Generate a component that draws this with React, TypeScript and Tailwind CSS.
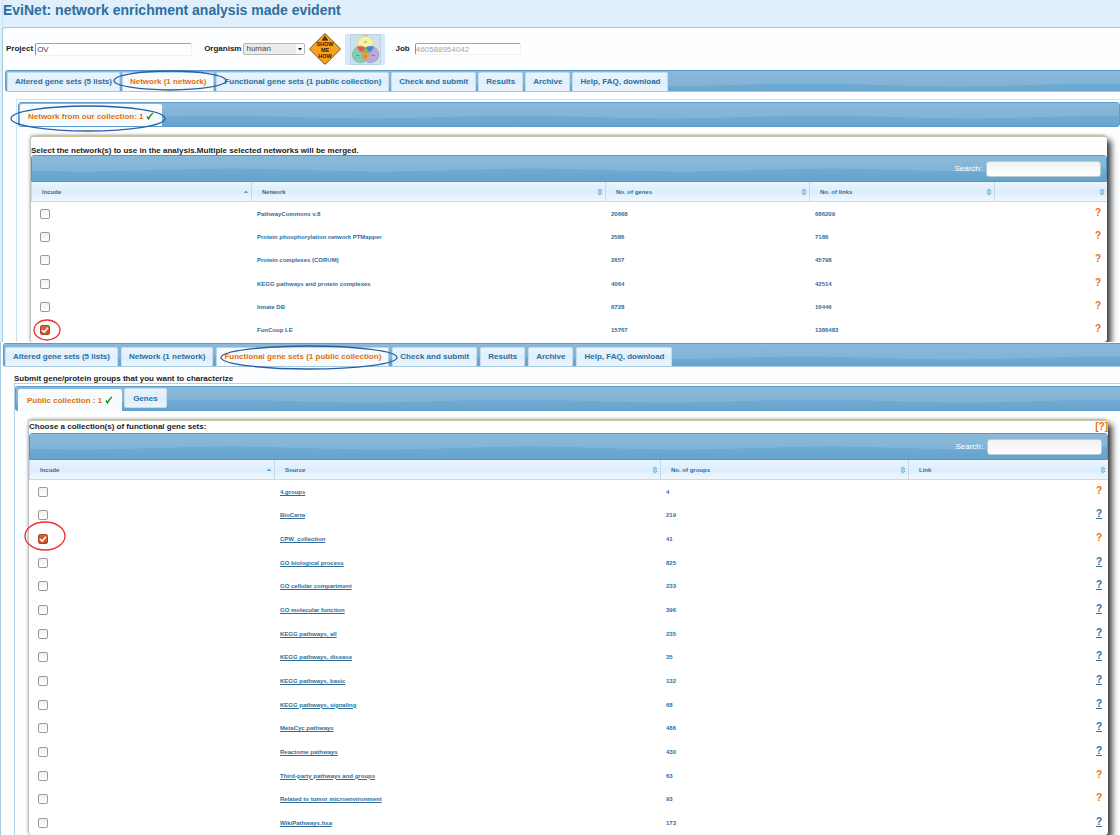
import React, { useId } from "react";

type Column = { label: string; width: string; sort: "up" | "both" };

const NETWORK_COLUMNS: Column[] = [
  { label: "Incude", width: "w-[220px]", sort: "up" },
  { label: "Network", width: "", sort: "both" },
  { label: "No. of genes", width: "w-[204px]", sort: "both" },
  { label: "No. of links", width: "w-[185px]", sort: "both" },
  { label: "", width: "w-[113px]", sort: "both" },
];

const NETWORKS = [
  { name: "PathwayCommons v.8", genes: "20668", links: "686209" },
  { name: "Protein phosphorylation network PTMapper", genes: "2586", links: "7186" },
  { name: "Protein complexes (CORUM)", genes: "2657", links: "45798" },
  { name: "KEGG pathways and protein complexes", genes: "4064", links: "42514" },
  { name: "Innate DB", genes: "6728", links: "16446" },
  { name: "FunCoup LE", genes: "15767", links: "1386483", checked: true },
];

const COLLECTION_COLUMNS: Column[] = [
  { label: "Incude", width: "w-[245px]", sort: "up" },
  { label: "Source", width: "", sort: "both" },
  { label: "No. of groups", width: "w-[248px]", sort: "both" },
  { label: "Link", width: "w-[200px]", sort: "both" },
];

const COLLECTIONS = [
  { name: "4.groups", groups: "4", local: true },
  { name: "BioCarta", groups: "219" },
  { name: "CPW_collection", groups: "41", local: true, checked: true },
  { name: "GO biological process", groups: "825" },
  { name: "GO cellular compartment", groups: "233" },
  { name: "GO molecular function", groups: "396" },
  { name: "KEGG pathways, all", groups: "235" },
  { name: "KEGG pathways, disease", groups: "35" },
  { name: "KEGG pathways, basic", groups: "132" },
  { name: "KEGG pathways, signaling", groups: "68" },
  { name: "MetaCyc pathways", groups: "486" },
  { name: "Reactome pathways", groups: "430" },
  { name: "Third-party pathways and groups", groups: "63", local: true },
  { name: "Related to tumor microenvironment", groups: "93", local: true },
  { name: "WikiPathways.hsa", groups: "173" },
];

const MAIN_TABS = [
  "Altered gene sets (5 lists)",
  "Network (1 network)",
  "Functional gene sets (1 public collection)",
  "Check and submit",
  "Results",
  "Archive",
  "Help, FAQ, download",
];

function Wave() {
  const id = useId();
  return (
    <svg className="absolute inset-0 h-full w-full" aria-hidden="true">
      <defs>
        <linearGradient id={id + "low"} x1="0" y1="12" x2="0" y2="26" gradientUnits="userSpaceOnUse">
          <stop offset="0" stopColor="#70abd2" />
          <stop offset="1" stopColor="#65a2cd" />
        </linearGradient>
        <linearGradient id={id + "top"} x1="0" y1="0" x2="0" y2="1">
          <stop offset="0" stopColor="#8ab9da" />
          <stop offset="1" stopColor="#7db1d5" />
        </linearGradient>
        <pattern id={id} x="-100" width="300" height="27" patternUnits="userSpaceOnUse">
          <path d="M0 12.500 C55 12.500 95 15.500 150 15.500 C205 15.500 245 12.500 300 12.500 V27 H0 Z" fill={`url(#${id}low)`} />
        </pattern>
      </defs>
      <rect width="100%" height="100%" fill={`url(#${id}top)`} />
      <rect width="100%" height="100%" fill={`url(#${id})`} />
    </svg>
  );
}

function Ring({ className }: { className: string }) {
  return (
    <svg className={`pointer-events-none absolute z-10 overflow-visible ${className}`} aria-hidden="true">
      <ellipse cx="50%" cy="50%" rx="50%" ry="50%" fill="none" stroke="currentColor" strokeWidth="1.3" />
    </svg>
  );
}

function Tick() {
  return (
    <svg viewBox="0 0 8 10" className="h-[10px] w-2" aria-hidden="true">
      <path d="M1 4.500 L2.600 6.800 Q4.200 3.200 7 1" fill="none" stroke="#0c8a10" strokeWidth="1.400" />
    </svg>
  );
}

function MainTabs({ active, ring, gap }: { active: number; ring: string; gap: string }) {
  return (
    <nav className="relative h-full">
      <Wave />
      <div className={`relative flex h-full items-end ${gap}`} role="tablist">
        {MAIN_TABS.map((tab, i) => (
          <div key={tab} className="relative shrink-0">
            <button
              type="button"
              role="tab"
              aria-selected={i === active}
              className={`block h-[19px] rounded-t-[2px] border-x border-t px-[7px] text-[8px] leading-[18px] font-bold whitespace-nowrap ${
                i === active
                  ? "border-[#b5d5ee] bg-[#f8fbfe] text-[#e17009]"
                  : "border-[#c5dbec] bg-linear-to-b from-[#ebf5fd] via-[#dfeffc] to-[#eaf4fd] text-[#2e6e9e]"
              }`}
            >
              {tab}
            </button>
            {i === active && <Ring className={`text-[#2b5fa3] ${ring}`} />}
          </div>
        ))}
      </div>
    </nav>
  );
}

function SortIcon({ kind }: { kind: "up" | "both" }) {
  return (
    <svg viewBox="0 0 6 8" className="h-2 w-[6px]" aria-hidden="true">
      {kind === "up" ? (
        <path d="M0.500 5 L3 2.500 L5.500 5 Z" fill="#5ba3d6" />
      ) : (
        <g fill="#c4e0f4" stroke="#6aaedb" strokeWidth="0.900">
          <path d="M0.900 3 L3 0.900 L5.100 3 Z" />
          <path d="M0.900 5 L3 7.100 L5.100 5 Z" />
        </g>
      )}
    </svg>
  );
}

function CheckBox({ label, checked, ring }: { label: string; checked?: boolean; ring: string }) {
  return (
    <div className="relative ml-[9px] grid h-[10px] w-[10px]">
      <input
        type="checkbox"
        aria-label={label}
        defaultChecked={checked}
        className="peer col-start-1 row-start-1 h-[10px] w-[10px] appearance-none rounded-[2px] border border-[#9a9a9a] bg-linear-to-b from-[#f0f0f0] to-white checked:border-[#a04a2c] checked:from-[#d9623a] checked:to-[#cf5428]"
      />
      <svg
        viewBox="0 0 10 10"
        className="pointer-events-none invisible col-start-1 row-start-1 h-[10px] w-[10px] peer-checked:visible"
        aria-hidden="true"
      >
        <path d="M2 5 L4.200 7.200 L8 2.800" fill="none" stroke="#fff" strokeWidth="1.600" />
      </svg>
      {checked && <Ring className={`text-[#f2312c] ${ring}`} />}
    </div>
  );
}

function SearchBar({ id }: { id: string }) {
  return (
    <div className="relative h-[27px] overflow-hidden rounded-t-[3px] border border-[#4f9ad0]">
      <Wave />
      <div className="relative flex h-full items-center justify-end gap-1 pr-[5px]">
        <label htmlFor={id} className="text-[8px] text-white">
          Search:
        </label>
        <input
          id={id}
          type="text"
          className="h-4 w-[115px] rounded-[3px] border border-[#b9cbd8] bg-linear-to-b from-[#f1f1f1] to-white px-1 text-[8px] text-[#333] outline-none"
        />
      </div>
    </div>
  );
}

function TableHead({ columns }: { columns: Column[] }) {
  return (
    <thead>
      <tr className="h-5">
        {columns.map((c, i) => (
          <th
            key={i}
            className={`h-5 border-b border-l border-[#c5dbec] bg-linear-to-b from-[#eaf5fd] via-[#dcedfb] to-[#eef7fe] p-0 ${c.width}`}
          >
            <div className="flex items-center justify-between pr-[2px] pl-[10px] text-[6px] leading-[10px] text-[#2e6e9e]">
              <span>{c.label}</span>
              <SortIcon kind={c.sort} />
            </div>
          </th>
        ))}
      </tr>
    </thead>
  );
}

function WarningSign() {
  return (
    <svg viewBox="0 0 32 32" className="h-8 w-8" role="img" aria-label="Show me how">
      <rect x="4.900" y="4.900" width="22.200" height="22.200" rx="1.200" transform="rotate(45 16 16)" fill="#f9a11b" stroke="#4a3410" strokeWidth="0.700" />
      <path d="M16 2.400 L19.200 7.600 H12.800 Z" fill="#2a1d08" />
      <path d="M16 4.400 V6.600" stroke="#f9a11b" strokeWidth="0.700" />
      <g fill="#2a1d08" fontFamily="Liberation Sans, sans-serif" fontWeight="700" fontSize="5.500" textAnchor="middle">
        <text x="16" y="12.600">SHOW</text>
        <text x="16" y="18.800">ME</text>
        <text x="16" y="25">HOW</text>
      </g>
    </svg>
  );
}

function VennButton() {
  return (
    <button type="button" aria-label="Venn diagram" className="flex h-[31px] w-10 items-center justify-center bg-[#d3e8f8]">
      <svg viewBox="0 0 31 31" className="h-[31px] w-[31px]" aria-hidden="true">
        <rect x="0.500" y="0.500" width="30" height="30" fill="#cce0ee" stroke="#bdd2e2" />
        <circle cx="15.500" cy="10" r="8" fill="#f6f3a4" stroke="#c9c78c" strokeWidth="0.500" />
        <circle cx="10.500" cy="20.500" r="8.300" fill="#82cbb4" stroke="#6aa996" strokeWidth="0.500" />
        <circle cx="20.500" cy="20.500" r="8.300" fill="#b3a5d3" fillOpacity="0.900" stroke="#8f83b3" strokeWidth="0.500" />
        <path d="M7.400 12.400 Q11.500 11 15.500 13.800 L12.300 18.500 Q8.200 17.500 7.400 12.400 Z" fill="#ee5a4f" />
        <path d="M23.600 12.400 Q19.500 11 15.500 13.800 L18.700 18.500 Q22.800 17.500 23.600 12.400 Z" fill="#4a8fd0" />
        <path d="M15.500 13.500 L18.900 18.300 Q15.500 19.800 12.100 18.300 Z" fill="#79c043" />
        <path d="M12.300 18.300 Q15.500 19.800 18.700 18.300 Q20 23 15.500 27 Q11 23 12.300 18.300 Z" fill="#f39a3d" />
        <path d="M14 8 H17 M6.500 21.500 H9 M21.500 21.500 H24.500 M15.500 21 V23.500 M10.500 15 H12 M19 15 H20.500" stroke="#555" strokeWidth="0.600" />
        <path d="M14 2.500 V1 H17 V2.500" fill="none" stroke="#e4a090" strokeWidth="0.700" />
      </svg>
    </button>
  );
}

const cardClass =
  "rounded-[3px] border-t border-[#c6c4a0] bg-white shadow-[4px_4px_6px_#333,-1px_-1px_3px_rgba(0,0,0,0.3)]";
const fieldClass =
  "rounded-[2px] border border-t-[#a5a5a5] border-l-[#8f8f8f] border-r-[#f0f0f0] border-b-[#f0f0f0] bg-white text-[8px] leading-[10px] outline-none";
const labelClass = "text-[8px] font-bold text-[#1c1c1c]";

export default function App() {
  return (
    <div className="min-h-screen overflow-hidden bg-[#dfeffc] font-['Liberation_Sans',Arial,sans-serif] text-[#2e6e9e]">
      <section className="overflow-hidden pl-[2px]">
        <h1 className="h-[27px] border-l border-[#cfe2f1] text-[14px] leading-5 font-bold text-[#2e6e9e]">
          EviNet: network enrichment analysis made evident
        </h1>
        <div className="rounded-tl-[3px] border-t border-l border-[#a6c9e2] bg-[#fcfeff] pl-[2px]">
          <form className="flex h-[42px] items-center pl-px">
            <label htmlFor="project" className={labelClass}>
              Project
            </label>
            <input id="project" type="text" defaultValue="OV" className={`ml-[2px] h-[13px] w-[157px] px-px text-[#444] ${fieldClass}`} />
            <label htmlFor="organism" className={`ml-3 ${labelClass}`}>
              Organism
            </label>
            <div className="relative ml-[2px]">
              <select
                id="organism"
                defaultValue="human"
                className="block h-3 w-[62px] appearance-none rounded-[2px] border border-[#b5b5b5] bg-[#ebebeb] pl-[2px] text-[8px] leading-[10px] text-[#444] outline-none"
              >
                <option value="human">human</option>
              </select>
              <svg viewBox="0 0 8 10" className="pointer-events-none absolute top-px right-px h-[10px] w-2" aria-hidden="true">
                <rect width="8" height="10" fill="#f8f8f8" />
                <path d="M2 4 H6 L4 6.500 Z" fill="#111" />
              </svg>
            </div>
            <div className="ml-1">
              <WarningSign />
            </div>
            <div className="ml-1">
              <VennButton />
            </div>
            <label htmlFor="job" className={`ml-[10px] ${labelClass}`}>
              Job
            </label>
            <input id="job" type="text" defaultValue="460588954042" className={`ml-[5px] h-3 w-[106px] text-[#a5a5a5] ${fieldClass}`} />
          </form>

          <div className="h-[22px] rounded-l-[3px] border-t border-b border-l border-[#5c9ccc] border-b-[#a6c9e2]">
            <MainTabs active={1} gap="gap-[2px] pl-px" ring="-left-2 -top-px h-[19px] w-[112px]" />
          </div>

          <div className="mt-[7px] ml-[11px] border-t border-l border-[#cfe2f0] pt-[2px] pl-px">
            <div className="relative h-[25px] rounded-[3px] border border-[#5c9ccc]">
              <Wave />
              <div className="relative flex h-full items-end pl-px">
                <div className="relative">
                  <button
                    type="button"
                    className="flex h-[22px] items-center gap-[2px] rounded-t-[2px] bg-[#f8fbfe] px-2 pt-[3px] text-[8px] font-bold whitespace-nowrap text-[#e17009]"
                  >
                    Network from our collection: 1 <Tick />
                  </button>
                  <Ring className="top-[2px] -left-[9px] h-[25px] w-[154px] text-[#2b5fa3]" />
                </div>
              </div>
            </div>

            <div className={`mt-[9px] mr-[13px] ml-[13px] ${cardClass}`}>
              <p className="h-[18px] pt-2 text-[8px] leading-[12px] font-bold whitespace-nowrap text-[#1c1c1c]">
                Select the network(s) to use in the analysis.Multiple selected networks will be merged.
              </p>
              <SearchBar id="network-search" />
              <table className="h-[160px] w-full table-fixed border-separate border-spacing-0 text-left text-[6px] leading-[8px] font-bold">
                <TableHead columns={NETWORK_COLUMNS} />
                <tbody>
                  {NETWORKS.map((n) => (
                    <tr key={n.name}>
                      <td className="p-0">
                        <CheckBox label={n.name} checked={n.checked} ring="-top-[5px] -left-[6px] h-[20px] w-[26px]" />
                      </td>
                      <td className="px-[6px] py-0">{n.name}</td>
                      <td className="px-[6px] py-0">{n.genes}</td>
                      <td className="px-[6px] py-0">{n.links}</td>
                      <td className="px-[6px] pt-0 pb-[2px] text-right text-[10px] text-[#e8700a]">?</td>
                    </tr>
                  ))}
                </tbody>
              </table>
            </div>
          </div>
        </div>
      </section>

      <section className="overflow-hidden border-l border-[#a6c9e2] bg-[#fcfeff] pt-px pl-[2px]">
        <div className="h-6 rounded-l-[3px] border-t border-b border-l border-[#5c9ccc] border-b-[#a6c9e2]">
          <MainTabs active={2} gap="gap-[3px] pl-px" ring="left-[5px] -top-px h-[23px] w-[176px]" />
        </div>
        <p className="mt-[6px] ml-[11px] h-[10px] text-[8px] leading-[12px] font-bold text-[#1c1c1c]">
          Submit gene/protein groups that you want to characterize
        </p>
        <div className="ml-[11px] border-t border-l border-[#b5d3e8] pt-[2px]">
          <div className="relative h-[25px] rounded-l-[3px] border-y border-l border-[#5c9ccc]">
            <Wave />
            <div className="relative flex h-full items-start gap-[2px] pl-[2px]">
              <button
                type="button"
                className="mt-[2px] flex h-[22px] items-center gap-[3px] rounded-t-[2px] bg-[#f8fbfe] px-[9px] pt-px text-[8px] font-bold whitespace-nowrap text-[#e17009]"
              >
                Public collection : 1 <Tick />
              </button>
              <button
                type="button"
                className="mt-px h-5 rounded-[2px] border border-[#c5dbec] bg-linear-to-b from-[#ebf5fd] via-[#dfeffc] to-[#eaf4fd] px-2 pt-px text-[8px] font-bold text-[#2e6e9e]"
              >
                Genes
              </button>
            </div>
          </div>

          <div className={`mt-[9px] mr-3 ml-[14px] ${cardClass}`}>
            <div className="flex h-3 items-center justify-between text-[8px] leading-[12px] font-bold text-[#1c1c1c]">
              <h2>Choose a collection(s) of functional gene sets:</h2>
              <a href="#help" className="text-[10px] text-[#e8700a]">
                [?]
              </a>
            </div>
            <SearchBar id="collection-search" />
            <table className="h-[375px] w-full table-fixed border-separate border-spacing-0 text-left text-[6px] leading-[8px] font-bold">
              <TableHead columns={COLLECTION_COLUMNS} />
              <tbody>
                {COLLECTIONS.map((c) => (
                  <tr key={c.name}>
                    <td className="p-0">
                      <CheckBox label={c.name} checked={c.checked} ring="-top-[12px] -left-[13px] h-[28px] w-[40px]" />
                    </td>
                    <td className="px-[6px] py-0">
                      <a href="#source" className="underline">
                        {c.name}
                      </a>
                    </td>
                    <td className="px-[6px] py-0">{c.groups}</td>
                    <td className="px-[6px] pt-0 pb-[2px] text-right text-[10px]">
                      {c.local ? (
                        <span className="text-[#e8700a]">?</span>
                      ) : (
                        <a href="#link" className="underline">
                          ?
                        </a>
                      )}
                    </td>
                  </tr>
                ))}
              </tbody>
            </table>
          </div>
        </div>
      </section>
    </div>
  );
}
